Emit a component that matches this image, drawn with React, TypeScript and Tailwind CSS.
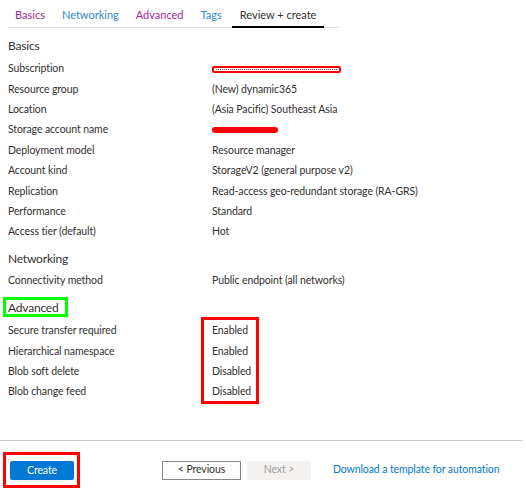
import React from "react";

type Row = { label: string; value?: string; redact?: "sub" | "name" };

const basics: Row[] = [
  { label: "Subscription", redact: "sub" },
  { label: "Resource group", value: "(New) dynamic365" },
  { label: "Location", value: "(Asia Pacific) Southeast Asia" },
  { label: "Storage account name", redact: "name" },
  { label: "Deployment model", value: "Resource manager" },
  { label: "Account kind", value: "StorageV2 (general purpose v2)" },
  { label: "Replication", value: "Read-access geo-redundant storage (RA-GRS)" },
  { label: "Performance", value: "Standard" },
  { label: "Access tier (default)", value: "Hot" },
];

const advanced: Row[] = [
  { label: "Secure transfer required", value: "Enabled" },
  { label: "Hierarchical namespace", value: "Enabled" },
  { label: "Blob soft delete", value: "Disabled" },
  { label: "Blob change feed", value: "Disabled" },
];

const DataRow = ({ row }: { row: Row }) => (
  <div className="flex h-[20.4px] items-center whitespace-nowrap">
    <div className="w-[204px] shrink-0">{row.label}</div>
    {row.redact === "sub" && (
      <div className="flex h-[7px] w-[129px] items-center rounded-[2px] border-2 border-[#ff0000] bg-white px-[2px]">
        <div className="h-px w-full border-t border-dotted border-[#555]" />
      </div>
    )}
    {row.redact === "name" && (
      <div className="h-[6px] w-[66px] rounded-full bg-[#ff0000]" />
    )}
    {row.value && <div>{row.value}</div>}
  </div>
);

export default function App() {
  return (
    <div className="relative h-[494px] w-[526px] overflow-hidden bg-white font-['Segoe_UI','Lato',sans-serif] text-[10.5px] tracking-[-0.1px] text-[#323130]">
      {/* tabs */}
      <div className="ml-[8px] flex h-[28px] w-[332px] items-end whitespace-nowrap border-b border-[#e1dfdd] pl-[7px] text-[11px] tracking-normal">
        <div className="mr-[17px] pb-[4px] text-[#a4279b]">Basics</div>
        <div className="mr-[17px] pb-[4px] text-[#2f86d8]">Networking</div>
        <div className="mr-[17px] pb-[4px] text-[#a4279b]">Advanced</div>
        <div className="mr-[10px] pb-[4px] text-[#2f86d8]">Tags</div>
        <div className="-mb-px border-b-2 border-black px-[8px] pb-[3px] text-[#323130]">Review + create</div>
      </div>

      <div className="pl-[8px]">
        <div className="mt-[8px] h-[20px] text-[12px] leading-[20px] tracking-[-0.2px]">Basics</div>
        <div className="mt-[3px]">
          {basics.map((r) => (
            <DataRow key={r.label} row={r} />
          ))}
        </div>

        <div className="mt-[6px] h-[20px] text-[12px] leading-[20px] tracking-[-0.2px]">Networking</div>
        <div className="mt-[2px]">
          <DataRow row={{ label: "Connectivity method", value: "Public endpoint (all networks)" }} />
        </div>

        <div className="relative mt-[7px] h-[20px] text-[12px] leading-[20px] tracking-[-0.2px]">
          <span>Advanced</span>
          <div className="absolute -left-[5px] -top-[1px] h-[20px] w-[65px] border-[3px] border-[#00ff00]" />
        </div>
        <div className="relative mt-[3px]">
          {advanced.map((r) => (
            <DataRow key={r.label} row={r} />
          ))}
          <div className="absolute left-[193px] top-[-4px] h-[87px] w-[58px] border-[3px] border-[#ff0000]" />
        </div>
      </div>

      {/* footer */}
      <div className="absolute left-0 right-[4px] top-[440px] border-t border-[#c8c6c4]" />
      <div className="absolute left-0 top-[452px] flex w-full items-center whitespace-nowrap">
        <div className="ml-[3px] h-[36px] w-[77px] border-[3px] border-[#ff0000] pl-[4px] pt-[6px]">
          <button className="h-[19px] w-[64px] rounded-[2px] bg-[#0078d4] text-white">Create</button>
        </div>
        <button className="ml-[82px] h-[19px] w-[79px] border border-[#8a8886] bg-white text-[#323130]">
          &lt; Previous
        </button>
        <button className="ml-[6px] h-[19px] w-[64px] rounded-[2px] bg-[#f3f2f1] text-[#a19f9d]">
          Next &gt;
        </button>
        <span className="ml-[22px] text-[#0078d4]">Download a template for automation</span>
      </div>
    </div>
  );
}
